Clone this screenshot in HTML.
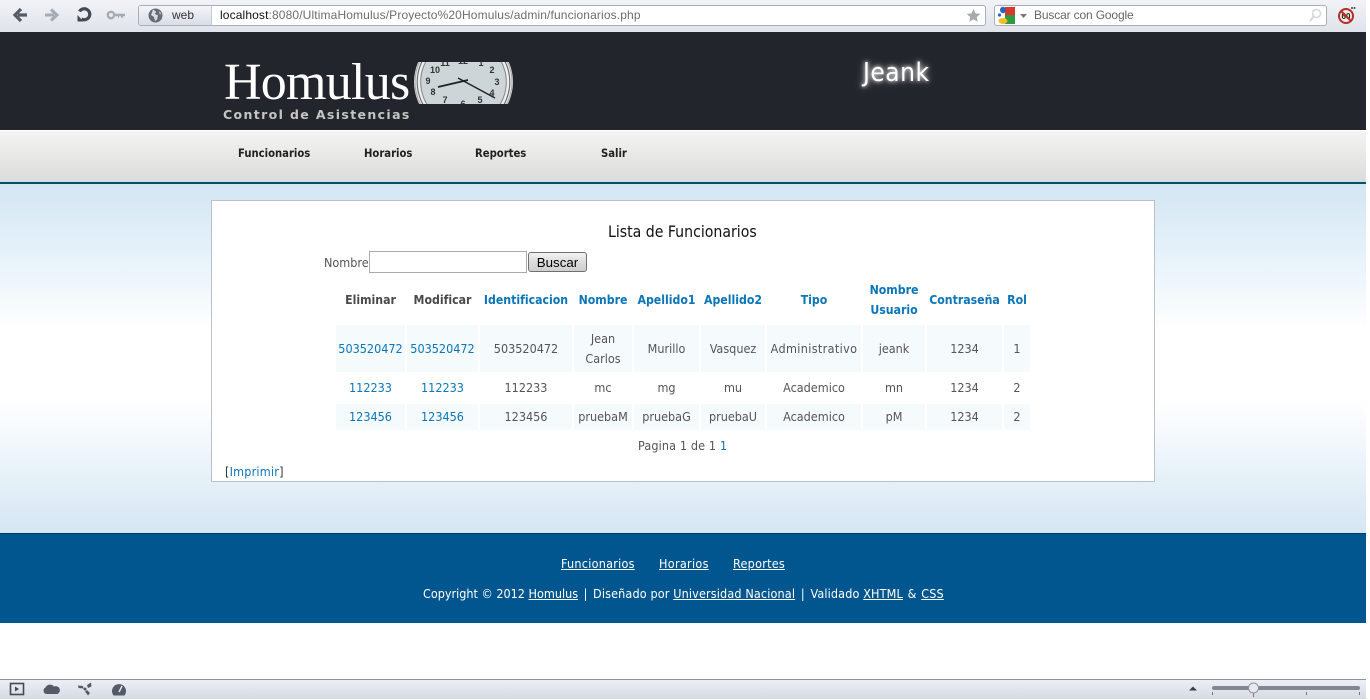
<!DOCTYPE html>
<html lang="es"><head><meta charset="utf-8"><title>Homulus</title>
<style>
html,body{margin:0;padding:0;background:#fff;width:1370px;height:700px;overflow:hidden}
body{position:relative;font-family:"DejaVu Sans Condensed","DejaVu Sans",sans-serif;font-stretch:condensed;font-size:12.5px;color:#555}
.a{position:absolute;white-space:nowrap}
a{color:#0b76b8;text-decoration:none}
#tb{left:0;top:0;width:1366px;height:32px;background:linear-gradient(#f1f3f7,#dfe3ea)}
#url{left:138px;top:5px;width:846px;height:19px;border:1px solid #a9afba;border-radius:3px;background:#fff;overflow:hidden}
#web{left:0;top:0;width:72px;height:19px;background:linear-gradient(#f3f5f9,#d9deE7);border-right:1px solid #c5cad3}
#srch{left:994px;top:5px;width:331px;height:19px;border:1px solid #a9afba;border-radius:3px;background:#fff}
.ch{font-family:"Liberation Sans",sans-serif;font-size:12px;font-stretch:normal}
#hd{left:0;top:32px;width:1366px;height:98px;background:#22252c}
#nav{left:0;top:130px;width:1366px;height:51px;background:linear-gradient(#f4f4f2,#dcdcdc);border-top:1px solid #fff;box-sizing:border-box}
#bar{left:0;top:181px;width:1366px;height:3px;background:linear-gradient(#bfe3ee 33%,#0a4f6a 33%)}
#bg{left:0;top:184px;width:1366px;height:349px;background:linear-gradient(#d3e6f3 0,#eaf4fb 24%,#fff 42%,#fff 62%,#f0f6fb 76%,#d5e6f3 100%)}
#box{left:211px;top:200px;width:942px;height:280px;background:#fff;border:1px solid #b9c2cc}
#ft{left:0;top:533px;width:1366px;height:90px;background:#01568f;border-top:1px solid #013a63;box-sizing:border-box}
#st{left:0;top:679px;width:1366px;height:20px;background:linear-gradient(#eceff5,#d5dae4);border-top:1px solid #8f9299;box-sizing:border-box}
.nv{top:146px;color:#222;font-weight:bold;font-size:11.2px;line-height:16px}
.f{color:#fff;text-decoration:underline}
table{position:absolute;left:334px;top:277px;border-collapse:separate;border-spacing:2px;table-layout:fixed;width:698px;text-align:center;line-height:20px}
th{font-weight:bold;font-size:12.2px;padding:0 0 2px;color:#4a4a4a;height:42px}
td{padding:0}
tr.o td{background:#f5fafd}
tr.r1 td{height:47px}tr.r2 td{height:28px}tr.r3 td{height:26px}
</style></head><body>
<div class="a" id="tb"></div>
<svg class="a" style="left:0;top:0" width="135" height="32" viewBox="0 0 135 32">
<path d="M27 15H18M21 9L15 15l6 6" fill="none" stroke="#555b66" stroke-width="3.200"/>
<path d="M45 15h9M51 9.500L57 15l-6 5.500" fill="none" stroke="#a5abb4" stroke-width="3"/>
<path d="M79.500 11.500a5.500 5.500 0 1 1 2 7.500" fill="none" stroke="#444a54" stroke-width="3.200"/><path d="M77.500 15v6.500h6z" fill="#444a54"/>
<circle cx="111" cy="15" r="3.200" fill="none" stroke="#a5abb4" stroke-width="2.400"/><path d="M114 13.700h11v2.600h-2v1.500h-2v-1.500h-2v1.500h-1v-1.500h-4z" fill="#a5abb4"/>
</svg>
<div class="a" id="url">
<div class="a" id="web"></div>
<svg class="a" style="left:9px;top:2px" width="15" height="15" viewBox="0 0 15 15"><circle cx="7.500" cy="7.500" r="7" fill="#666c75"/><path d="M5 1.500l3 2-1 2.500 3 1.500-1 4-2 1.500-1-4-3-2 1-2.500zM11 3l2 2-1 2z" fill="#d9dde3"/></svg>
<div class="a ch" style="left:33px;top:2px;line-height:15px;color:#333">web</div>
<div class="a ch" style="left:81px;top:2px;line-height:15px;color:#6d6d6d;letter-spacing:.13px"><span style="color:#111">localhost</span>:8080/UltimaHomulus/Proyecto%20Homulus/admin/funcionarios.php</div>
<svg class="a" style="left:827px;top:2px" width="15" height="15" viewBox="0 0 15 15"><path d="M7.500 1l2 4.400 4.800.5-3.600 3.200 1 4.700-4.200-2.400-4.200 2.400 1-4.700L.7 5.900l4.800-.5z" fill="#a7abb1"/></svg>
</div>
<div class="a" id="srch">
<svg class="a" style="left:2px;top:0" width="34" height="19" viewBox="0 0 34 19"><rect x="8" y="1" width="10" height="8.500" fill="#d8382c"/><rect x="8" y="9" width="10" height="9" fill="#2c9a3f"/><ellipse cx="6" cy="4" rx="3" ry="3.200" fill="#2c62c4"/><circle cx="2.500" cy="9" r="1.600" fill="#2c62c4"/><ellipse cx="6" cy="15" rx="4.500" ry="3" fill="#f2bd25"/><path d="M23 8h7l-3.500 4z" fill="#777"/></svg>
<div class="a ch" style="left:39px;top:2px;line-height:15px;color:#666;letter-spacing:-.15px">Buscar con Google</div>
<svg class="a" style="left:313px;top:2px" width="14" height="15" viewBox="0 0 14 15"><circle cx="8.500" cy="5.500" r="4" fill="none" stroke="#d5d7db" stroke-width="1.500"/><path d="M5.500 8.500L2 13" stroke="#d5d7db" stroke-width="2"/></svg>
</div>
<svg class="a" style="left:1336px;top:5px" width="20" height="20" viewBox="0 0 20 20"><circle cx="10" cy="11" r="7" fill="#f3e9e3" stroke="#b3302a" stroke-width="2"/><text x="10" y="14" font-size="8" font-weight="bold" text-anchor="middle" font-family="Liberation Sans" fill="#222">60</text><path d="M5 6l10 10" stroke="#b3302a" stroke-width="2"/><circle cx="16" cy="3" r="1" fill="#444"/><circle cx="18.500" cy="3" r="1" fill="#444"/></svg>

<div class="a" id="hd"></div>
<div class="a" style="left:224px;top:54px;font:52px/58px 'Liberation Serif',serif;font-stretch:normal;color:#fff;letter-spacing:-.75px">Homulus</div>
<div class="a" style="left:223px;top:107px;font:bold 12.5px/16px 'DejaVu Sans',sans-serif;color:#c4c5c1;letter-spacing:1.370px;font-stretch:normal">Control de Asistencias</div>
<svg class="a" style="left:412px;top:60px" width="104" height="46" viewBox="412 60 104 46">
<defs><clipPath id="c"><rect x="412" y="62" width="104" height="42"/></clipPath></defs>
<g clip-path="url(#c)"><circle cx="463.500" cy="82" r="49.500" fill="#e2e4e6"/><circle cx="463.500" cy="82" r="48.500" fill="none" stroke="#aaa" stroke-width="1"/><circle cx="463.500" cy="82" r="46.300" fill="none" stroke="#666" stroke-width="1"/><circle cx="463.500" cy="82" r="44.500" fill="none" stroke="#f0f0f0" stroke-width="1.500"/><circle cx="463.500" cy="82" r="42.800" fill="#cdd5d8" stroke="#888" stroke-width="1"/>
<g font-family="Liberation Sans" font-weight="bold" font-size="9" fill="#333" text-anchor="middle"><text x="435" y="73">10</text><text x="428" y="84">9</text><text x="433" y="95">8</text><text x="445" y="103">7</text><text x="463" y="107">6</text><text x="480" y="103">5</text><text x="492" y="96">4</text><text x="497" y="85">3</text><text x="492" y="73">2</text><text x="445" y="66">11</text><text x="463" y="64">12</text><text x="481" y="66">1</text></g>
<path d="M438 87L468 80" stroke="#222" stroke-width="1.800"/><path d="M458 78L495 98" stroke="#222" stroke-width="1.500"/></g>
</svg>
<div class="a" style="left:863px;top:58px;font-size:26px;line-height:30px;letter-spacing:.5px;color:#fff;text-shadow:0 0 4px #fff,0 0 9px #aaa">Jeank</div>

<div class="a" id="nav"></div>
<div class="a nv" style="left:238px">Funcionarios</div>
<div class="a nv" style="left:364px">Horarios</div>
<div class="a nv" style="left:475px">Reportes</div>
<div class="a nv" style="left:601px">Salir</div>
<div class="a" id="bar"></div>
<div class="a" id="bg"></div>

<div class="a" id="box"></div>
<div class="a" style="left:608px;top:222px;font-size:15.7px;line-height:20px;color:#111">Lista de Funcionarios</div>
<div class="a" style="left:324px;top:255px;line-height:16px">Nombre</div>
<div class="a" style="left:369px;top:251px;width:156px;height:20px;border:1px solid #aaa;background:#fff"></div>
<div class="a" style="left:528px;top:252px;width:57px;height:18px;border:1px solid #707070;border-radius:3px;background:linear-gradient(#f2f2f2,#dcdcdc 50%,#cfcfcf);font:13.300px/19px 'Liberation Sans',sans-serif;font-stretch:normal;color:#000;text-align:center">Buscar</div>

<table>
<colgroup><col style="width:69px"><col style="width:71px"><col style="width:92px"><col style="width:58px"><col style="width:65px"><col style="width:64px"><col style="width:94px"><col style="width:62px"><col style="width:75px"><col style="width:26px"></colgroup>
<tr><th>Eliminar</th><th>Modificar</th><th><a href="#">Identificacion</a></th><th><a href="#">Nombre</a></th><th><a href="#">Apellido1</a></th><th><a href="#">Apellido2</a></th><th><a href="#">Tipo</a></th><th><a href="#">Nombre Usuario</a></th><th><a href="#">Contraseña</a></th><th><a href="#">Rol</a></th></tr>
<tr class="o r1"><td><a href="#">503520472</a></td><td><a href="#">503520472</a></td><td>503520472</td><td>Jean Carlos</td><td>Murillo</td><td>Vasquez</td><td style="letter-spacing:.35px">Administrativo</td><td>jeank</td><td>1234</td><td>1</td></tr>
<tr class="r2"><td><a href="#">112233</a></td><td><a href="#">112233</a></td><td>112233</td><td>mc</td><td>mg</td><td>mu</td><td>Academico</td><td>mn</td><td>1234</td><td>2</td></tr>
<tr class="o r3"><td><a href="#">123456</a></td><td><a href="#">123456</a></td><td>123456</td><td>pruebaM</td><td>pruebaG</td><td>pruebaU</td><td>Academico</td><td>pM</td><td>1234</td><td>2</td></tr>
</table>
<div class="a" style="left:638px;top:438px;line-height:16px;letter-spacing:.13px">Pagina 1 de 1 <a href="#" style="color:#0b76b8">1</a></div>
<div class="a" style="left:225px;top:464px;line-height:16px;color:#333;letter-spacing:.2px">[<a href="#">Imprimir</a>]</div>

<div class="a" id="ft"></div>
<div class="a" style="left:561px;top:556px;line-height:16px;letter-spacing:.25px"><a href="#" class="f">Funcionarios</a></div>
<div class="a" style="left:659px;top:556px;line-height:16px;letter-spacing:.3px"><a href="#" class="f">Horarios</a></div>
<div class="a" style="left:733px;top:556px;line-height:16px;letter-spacing:.25px"><a href="#" class="f">Reportes</a></div>
<div class="a" style="left:423px;top:586px;line-height:16px;color:#fff">Copyright © 2012 <a href="#" class="f">Homulus</a> <span style="margin:0 2px">|</span> <span style="letter-spacing:.14px">Diseñado por <a href="#" class="f">Universidad Nacional</a> <span style="margin:0 2px">|</span> Validado <a href="#" class="f">XHTML</a> <span style="margin:0 1px">&amp;</span> <a href="#" class="f">CSS</a></span></div>

<div class="a" id="st"></div>
<svg class="a" style="left:0;top:680px" width="135" height="19" viewBox="0 0 135 19">
<rect x="10.500" y="3.500" width="13" height="11" fill="none" stroke="#444a54" stroke-width="1.600"/><path d="M15 6.500l4 2.500-4 2.500z" fill="#444a54"/>
<path d="M46 14a3.500 3.500 0 0 1-.5-6.500 5 5 0 0 1 8.500-1 4 4 0 0 1 3.500 7.500z" fill="#555b66"/>
<circle cx="85" cy="9" r="1.500" fill="#555b66"/><path d="M78 5.500l5 .5 .5 2.500-5-.5zM91 2.500l.5 4-3.500 1.500-1-3zM88 15.500l-3-4 2-1.500 3 3z" fill="#555b66"/>
<path d="M113.500 15.500a7 7 0 1 1 11 0z" fill="#555b66"/><path d="M119 12l3-6" stroke="#e3e6ec" stroke-width="1.500"/>
</svg>
<svg class="a" style="left:1189px;top:680px" width="177" height="19" viewBox="0 0 177 19">
<path d="M0 10.500l4-4 4 4z" fill="#3a3d44"/>
<rect x="23" y="6" width="148" height="4" rx="2" fill="#83878f"/>
<path d="M23.500 12v3M64.500 12v5M117.500 12v3M170.500 12v3" stroke="#777" stroke-width="1"/>
<circle cx="64.500" cy="8" r="5" fill="#e6e9ee" stroke="#8e939d"/>
</svg>
</body></html>
